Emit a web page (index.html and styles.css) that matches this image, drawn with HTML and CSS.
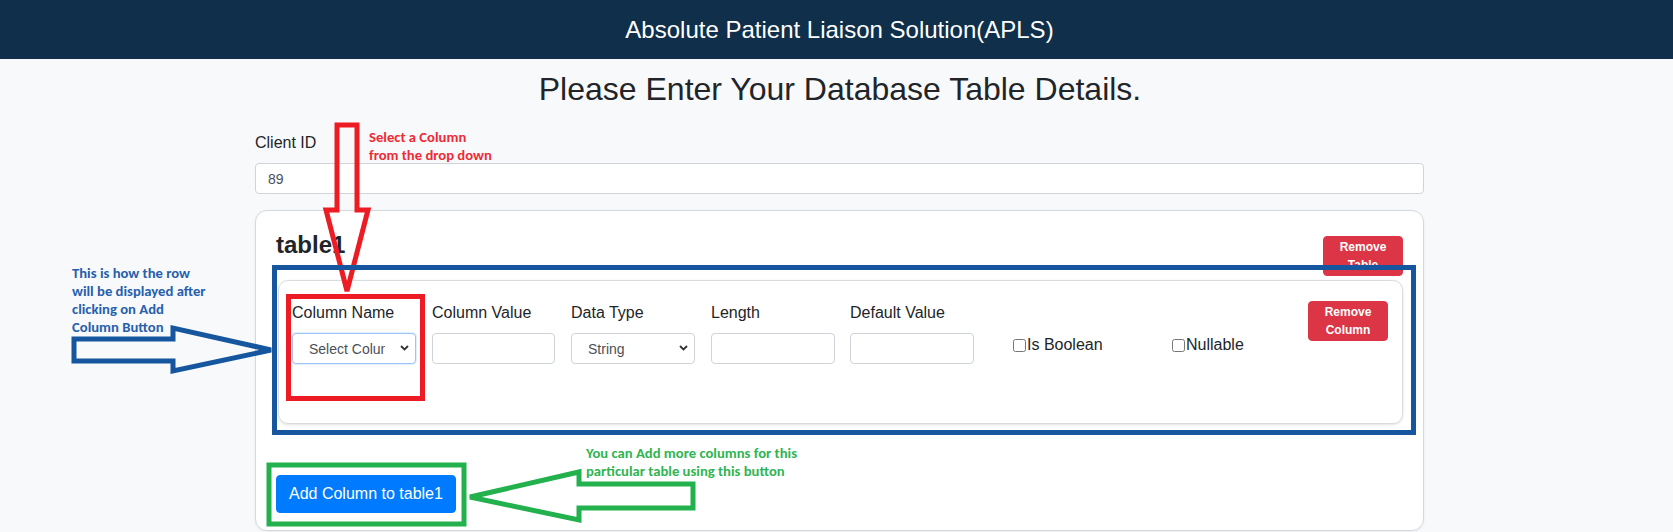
FILE: index.html
```html
<!DOCTYPE html>
<html lang="en">
<head>
<meta charset="utf-8">
<title>APLS - Database Table Details</title>
<link rel="stylesheet" href="styles.css">
</head>
<body>
<header class="topbar">Absolute Patient Liaison Solution(APLS)</header>
<main class="page">
  <h1 class="page-title">Please Enter Your Database Table Details.</h1>
  <div class="container">
    <label class="field-label" for="client">Client ID</label>
    <input id="client" class="form-control client-input" value="89">

    <section class="table-card">
      <div class="table-card-head">
        <h2 class="table-name">table1</h2>
        <button class="btn btn-danger btn-small head-remove">Remove Table</button>
      </div>

      <div class="column-card">
        <div class="column-row">
          <div class="field">
            <label class="field-label">Column Name</label>
            <div class="select-wrap">
              <select class="form-control form-select is-focused"><option>Select Column</option></select>
              <svg class="chev" viewBox="0 0 9 6" width="9" height="6"><polyline points="1,1 4.5,4.5 8,1" fill="none" stroke="#333" stroke-width="1.8"/></svg>
            </div>
          </div>
          <div class="field">
            <label class="field-label">Column Value</label>
            <input class="form-control" value="">
          </div>
          <div class="field">
            <label class="field-label">Data Type</label>
            <div class="select-wrap">
              <select class="form-control form-select"><option>String</option></select>
              <svg class="chev" viewBox="0 0 9 6" width="9" height="6"><polyline points="1,1 4.5,4.5 8,1" fill="none" stroke="#333" stroke-width="1.8"/></svg>
            </div>
          </div>
          <div class="field">
            <label class="field-label">Length</label>
            <input class="form-control" value="">
          </div>
          <div class="field">
            <label class="field-label">Default Value</label>
            <input class="form-control" value="">
          </div>
          <div class="check-cell">
            <label class="check"><input type="checkbox">Is Boolean</label>
          </div>
          <div class="check-cell">
            <label class="check"><input type="checkbox">Nullable</label>
          </div>
          <div class="btn-cell">
            <button class="btn btn-danger btn-small">Remove Column</button>
          </div>
        </div>
      </div>

      <button class="btn btn-primary add-btn">Add Column to table1</button>
    </section>
  </div>
</main>

<div class="annotations">
  <svg class="anno-svg" width="1673" height="532" viewBox="0 0 1673 532">
    <g fill="none" stroke-width="5" stroke-miterlimit="2">
      <polygon stroke="#ed1c24" points="337,125 357,125 357,210 368,210 347,291 326,210 337,210"/>
      <rect stroke="#ed1c24" x="288.5" y="296.5" width="134" height="102"/>
      <rect stroke="#15569f" x="274.5" y="267.5" width="1139" height="165"/>
      <polygon stroke="#15569f" points="74,339 173,339 173,328 271,350 173,371 173,361 74,361"/>
      <rect stroke="#22b14c" x="269" y="465" width="195" height="59"/>
      <polygon stroke="#22b14c" points="470,497 579,472 579,484 693,484 693,508 579,508 579,520"/>
    </g>
  </svg>
  <p class="note note-red">Select a Column<br>from the drop down</p>
  <p class="note note-blue">This is how the row<br>will be displayed after<br>clicking on Add<br>Column Button</p>
  <p class="note note-green">You can Add more columns for this<br>particular table using this button</p>
</div>
</body>
</html>
```

FILE: styles.css
```css
* { box-sizing: border-box; }

html, body {
  margin: 0;
  padding: 0;
}

body {
  background: #f8f9fa;
  font-family: "Liberation Sans", Arial, sans-serif;
  color: #212529;
  position: relative;
  overflow: hidden;
  height: 532px;
}

.topbar {
  height: 59px;
  background: #0f2f4a;
  color: #ffffff;
  font-size: 24px;
  line-height: 27px;
  padding: 16px 0 16px 6px;
  text-align: center;
}

.page-title {
  margin: 11px 0 0;
  padding-left: 7px;
  font-size: 32px;
  line-height: 1.2;
  font-weight: 400;
  text-align: center;
  color: #212529;
}

.container {
  margin-left: 255px;
  width: 1169px;
}

.field-label {
  display: block;
  font-size: 16px;
  line-height: 24px;
  margin-bottom: 8px;
  color: #212529;
}

.container > .field-label {
  margin-top: 23px;
}

.form-control {
  display: block;
  width: 100%;
  height: 31px;
  padding: 0 12px;
  font-family: "Liberation Sans", Arial, sans-serif;
  font-size: 14px;
  color: #495057;
  background: #ffffff;
  border: 1px solid #ced4da;
  border-radius: 4px;
  outline: none;
}

.client-input {
  padding-left: 12px;
}

.table-card {
  margin-top: 16px;
  background: #ffffff;
  border: 1px solid #d5d9de;
  border-radius: 12px;
  padding: 20px 20px 17px;
  box-shadow: 0 1px 3px rgba(0, 0, 0, 0.06);
}

.table-card-head {
  display: flex;
  justify-content: space-between;
  align-items: flex-start;
}

.table-name {
  margin: 0;
  font-size: 24px;
  line-height: 1.2;
  font-weight: 700;
  color: #212529;
}

.btn {
  font-family: "Liberation Sans", Arial, sans-serif;
  border: 1px solid transparent;
  border-radius: 4px;
  color: #ffffff;
  cursor: pointer;
}

.btn-danger {
  background: #dc3545;
  border-color: #dc3545;
}

.btn-small {
  width: 80px;
  height: 40px;
  padding: 1px 3px;
  font-size: 12px;
  font-weight: 700;
  line-height: 18px;
  text-align: center;
  vertical-align: top;
}

.head-remove {
  margin-top: 5px;
}

.column-card {
  margin: 4px 0 0 2px;
  border: 1px solid #d8dce1;
  border-radius: 10px;
  padding: 20px 14px 59px 13px;
  box-shadow: 0 1px 3px rgba(0, 0, 0, 0.12);
}

.column-row {
  display: grid;
  grid-template-columns: 140px 139px 140px 139px 163px 159px 136px 80px;
  align-items: start;
}

.field .form-control {
  width: 124px;
}

.field:nth-child(2) .form-control {
  width: 123px;
}

.select-wrap {
  position: relative;
  width: 124px;
}

.form-select {
  -webkit-appearance: none;
  appearance: none;
  padding: 0 30px 0 16px;
}

.is-focused {
  border-color: #9ec5f8;
  box-shadow: 0 0 0 1px rgba(13, 110, 253, 0.12);
}

.chev {
  position: absolute;
  right: 7px;
  top: 12px;
}

.check-cell {
  padding-top: 32px;
}

.check {
  display: inline-flex;
  align-items: center;
  font-size: 16px;
  line-height: 24px;
  color: #212529;
}

.check input {
  margin: 0 1px 0 0;
  width: 13px;
  height: 13px;
}

.add-btn {
  display: block;
  margin-top: 51px;
  background: #007bff;
  border-color: #007bff;
  font-size: 16px;
  line-height: 24px;
  padding: 6px 12px;
}

/* Annotation overlay */
.annotations {
  position: absolute;
  left: 0;
  top: 0;
  width: 1673px;
  height: 532px;
  pointer-events: none;
}

.anno-svg {
  position: absolute;
  left: 0;
  top: 0;
}

.note {
  position: absolute;
  margin: 0;
  font-family: Carlito, Lato, "Open Sans", sans-serif;
  font-weight: 700;
  font-size: 14.67px;
  line-height: 18px;
  white-space: nowrap;
}

.note-red {
  left: 369px;
  top: 128px;
  color: #ee2b36;
}

.note-blue {
  left: 72px;
  top: 264px;
  color: #2560ac;
}

.note-green {
  left: 586px;
  top: 444px;
  color: #2fb552;
}
```
